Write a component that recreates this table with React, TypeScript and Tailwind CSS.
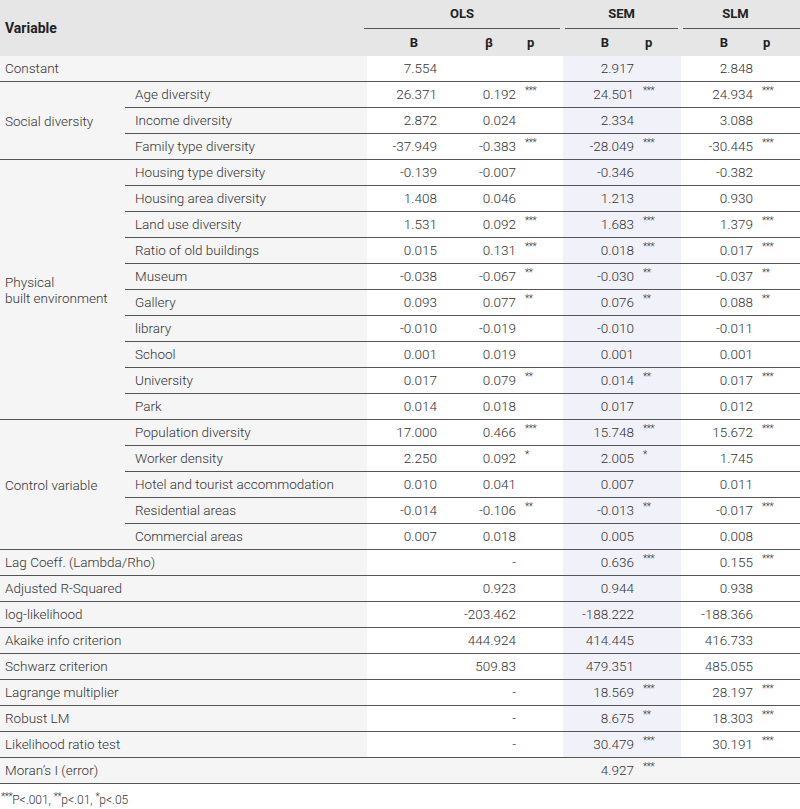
const font = { fontFamily: "Roboto, 'Liberation Sans', sans-serif" };

type Cells = [string, string, string, string, string, string, string];
// [olsB, olsBeta, olsP, semB, semP, slmB, slmP]

const Star = ({ s }: { s: string }) =>
  s ? <span className="relative -top-[4px] text-[10px] tracking-[-0.5px]">{s}</span> : null;

function DataCells({ c, last }: { c: Cells; last?: boolean }) {
  const bg = last ? "bg-[#f5f5f5]" : "bg-white";
  const sem = last ? "bg-[#f5f5f5]" : "bg-[#f1f2f9]";
  return (
    <>
      <div className={`w-[80px] ${bg} !justify-end pr-[10px]`}>{c[0]}</div>
      <div className={`w-[70px] ${bg} !justify-end pr-[1px]`}>{c[1]}</div>
      <div className={`w-[46px] ${bg} pl-[8px]`}><Star s={c[2]} /></div>
      <div className={`w-[77px] ${sem} !justify-end pr-[6px]`}>{c[3]}</div>
      <div className={`w-[41px] ${sem} pl-[3px]`}><Star s={c[4]} /></div>
      <div className={`w-[76px] ${bg} !justify-end pr-[4px]`}>{c[5]}</div>
      <div className={`w-[43px] ${bg} pl-[5px]`}><Star s={c[6]} /></div>
    </>
  );
}

function SingleRow({ label, c, last }: { label: string; c: Cells; last?: boolean }) {
  return (
    <div className="flex h-[26px] items-stretch border-b border-[#555] [&>div]:flex [&>div]:items-center">
      <div className="w-[367px] bg-[#f5f5f5] pl-[5px]">{label}</div>
      <DataCells c={c} last={last} />
    </div>
  );
}

function Group({ label, rows }: { label: React.ReactNode; rows: [string, Cells][] }) {
  return (
    <div className="flex border-b border-[#555]">
      <div className="w-[125px] bg-[#f5f5f5] pl-[5px] flex items-center leading-[16px]">{label}</div>
      <div className="flex flex-col flex-1">
        {rows.map(([name, c], i) => (
          <div
            key={name}
            className={`flex items-stretch ${i < rows.length - 1 ? "h-[26px] border-b border-[#555]" : "h-[25px]"} [&>div]:flex [&>div]:items-center`}
          >
            <div className="w-[242px] bg-[#f5f5f5] pl-[10px]">{name}</div>
            <DataCells c={c} />
          </div>
        ))}
      </div>
    </div>
  );
}

export default function App() {
  return (
    <div style={font} className="w-[800px] h-[809px] bg-white text-[13.5px] font-light text-[#333]">
      {/* header */}
      <div className="flex h-[56px] bg-[#e6e6e6] font-bold text-[13px] text-[#222]">
        <div className="w-[367px] flex items-center pl-[5px] text-[14px]">Variable</div>
        <div className="flex flex-col">
          <div className="flex h-[29px]">
            <div className="w-[196px] mr-[3px] border-b border-[#555] flex items-center justify-center">OLS</div>
            <div className="w-[113px] ml-[2px] mr-[3px] border-b border-[#555] flex items-center justify-center">SEM</div>
            <div className="w-[117px] ml-[2px] border-b border-[#555] flex items-center justify-center pr-[12px]">SLM</div>
          </div>
          <div className="flex h-[27px] items-center">
            <div className="w-[80px] pl-[20px] text-center">B</div>
            <div className="w-[70px] pl-[20px] text-center">β</div>
            <div className="w-[46px] pl-[13px]">p</div>
            <div className="w-[77px] pl-[13px] text-center">B</div>
            <div className="w-[41px] pl-[8px]">p</div>
            <div className="w-[76px] pl-[16px] text-center">B</div>
            <div className="w-[43px] pl-[9px]">p</div>
          </div>
        </div>
      </div>

      <SingleRow label="Constant" c={["7.554", "", "", "2.917", "", "2.848", ""]} />
      <Group
        label="Social diversity"
        rows={[
          ["Age diversity", ["26.371", "0.192", "***", "24.501", "***", "24.934", "***"]],
          ["Income diversity", ["2.872", "0.024", "", "2.334", "", "3.088", ""]],
          ["Family type diversity", ["-37.949", "-0.383", "***", "-28.049", "***", "-30.445", "***"]],
        ]}
      />
      <Group
        label={<span>Physical<br />built environment</span>}
        rows={[
          ["Housing type diversity", ["-0.139", "-0.007", "", "-0.346", "", "-0.382", ""]],
          ["Housing area diversity", ["1.408", "0.046", "", "1.213", "", "0.930", ""]],
          ["Land use diversity", ["1.531", "0.092", "***", "1.683", "***", "1.379", "***"]],
          ["Ratio of old buildings", ["0.015", "0.131", "***", "0.018", "***", "0.017", "***"]],
          ["Museum", ["-0.038", "-0.067", "**", "-0.030", "**", "-0.037", "**"]],
          ["Gallery", ["0.093", "0.077", "**", "0.076", "**", "0.088", "**"]],
          ["library", ["-0.010", "-0.019", "", "-0.010", "", "-0.011", ""]],
          ["School", ["0.001", "0.019", "", "0.001", "", "0.001", ""]],
          ["University", ["0.017", "0.079", "**", "0.014", "**", "0.017", "***"]],
          ["Park", ["0.014", "0.018", "", "0.017", "", "0.012", ""]],
        ]}
      />
      <Group
        label="Control variable"
        rows={[
          ["Population diversity", ["17.000", "0.466", "***", "15.748", "***", "15.672", "***"]],
          ["Worker density", ["2.250", "0.092", "*", "2.005", "*", "1.745", ""]],
          ["Hotel and tourist accommodation", ["0.010", "0.041", "", "0.007", "", "0.011", ""]],
          ["Residential areas", ["-0.014", "-0.106", "**", "-0.013", "**", "-0.017", "***"]],
          ["Commercial areas", ["0.007", "0.018", "", "0.005", "", "0.008", ""]],
        ]}
      />
      <SingleRow label="Lag Coeff. (Lambda/Rho)" c={["", "-", "", "0.636", "***", "0.155", "***"]} />
      <SingleRow label="Adjusted R-Squared" c={["", "0.923", "", "0.944", "", "0.938", ""]} />
      <SingleRow label="log-likelihood" c={["", "-203.462", "", "-188.222", "", "-188.366", ""]} />
      <SingleRow label="Akaike info criterion" c={["", "444.924", "", "414.445", "", "416.733", ""]} />
      <SingleRow label="Schwarz criterion" c={["", "509.83", "", "479.351", "", "485.055", ""]} />
      <SingleRow label="Lagrange multiplier" c={["", "-", "", "18.569", "***", "28.197", "***"]} />
      <SingleRow label="Robust LM" c={["", "-", "", "8.675", "**", "18.303", "***"]} />
      <SingleRow label="Likelihood ratio test" c={["", "-", "", "30.479", "***", "30.191", "***"]} />
      <SingleRow label="Moran’s I (error)" c={["", "", "", "4.927", "***", "", ""]} last />

      <div className="pt-[9px] pl-[1px] text-[12px] leading-[14px]">
        <Star s="***" />P&lt;.001, <Star s="**" />p&lt;.01, <Star s="*" />p&lt;.05
      </div>
    </div>
  );
}
